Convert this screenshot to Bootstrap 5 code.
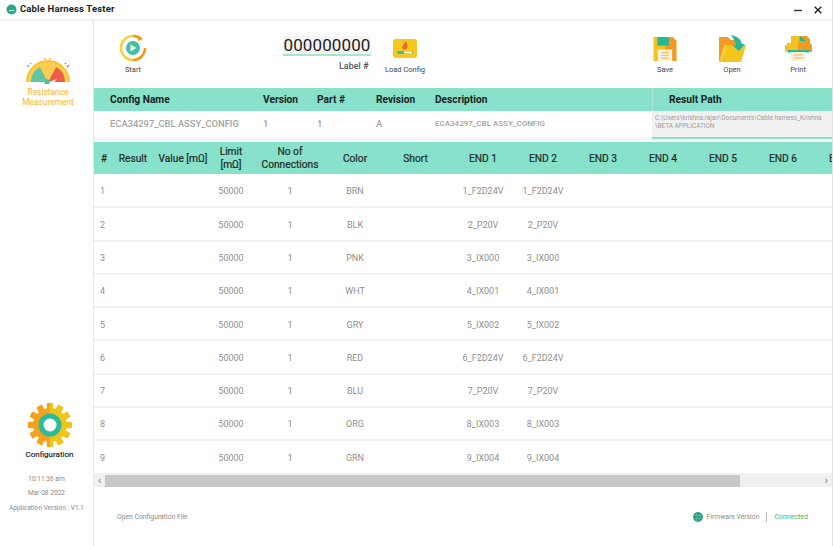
<!DOCTYPE html>
<html lang="en">
<head>
<meta charset="utf-8">
<title>Cable Harness Tester</title>
<link rel="stylesheet" href="https://cdn.jsdelivr.net/npm/bootstrap@5.3.0/dist/css/bootstrap.min.css">
<style>
html,body{margin:0;height:546px;overflow:hidden;background:#fff;font-family:Roboto,"Liberation Sans",sans-serif}
.shell{width:833px;height:546px;border-right:1px solid #e2e2e2}
.titlebar{height:21px;border-bottom:2px solid #f2f2f2;padding-left:6px}
.titlebar .ttl{font-size:9.5px;font-weight:700;color:#222;margin-left:3px;letter-spacing:.15px}
.winbtns{margin-right:10px;gap:12px}
.mainrow{height:525px}
.side{width:94px;flex:none;border-right:1px solid #e8e8e8;text-align:center}
.side .meas{margin-top:35px;padding-left:3px}
.side .mlabel{font-size:8.4px;line-height:10px;color:#fbb52c;margin-top:3px}
.side .lower{margin-bottom:30px}
.side .cfgicon{padding-left:6px}
.side .clabel{font-size:8px;color:#222;line-height:10px;margin-top:3px;padding-left:6px;-webkit-text-stroke:.15px #222}
.side .info{font-size:6.6px;color:#8a8a8a;line-height:14.8px;margin-top:12px}
.content{width:738px;flex:none;overflow:hidden}
.toolbar{height:67px}
.tool{font-size:7.5px;color:#444;text-align:center;line-height:9px}
.tool svg{display:block;margin:0 auto 4px}
.t-start{width:40px;margin:13px 0 0 19px}
.t-start svg,.t-open svg{margin-bottom:3px}
.t-label{width:88px;margin:15px 0 0 130px;text-align:center}
.labelval{background:#f5f5f5;border-bottom:2px solid #a5e6d3;font-size:17px;line-height:18px;height:20px;color:#222;letter-spacing:.1px}
.labelcap{font-size:9px;color:#444;line-height:10px;margin-top:5px;padding-left:56px;white-space:nowrap;text-align:left;-webkit-text-stroke:.1px #444}
.t-load{width:50px;margin:18px 0 0 9px}
.t-load .tl{display:block;margin-top:7px}
.t-save{width:40px;margin:16px 0 0 215px}
.t-open{width:40px;margin:14px 0 0 27px}
.t-print{width:40px;margin:15px 0 0 26px}
.cfghead{height:23px;background:#88e1cb;font-size:10.2px;font-weight:700;color:#16231f}
.cfgrow{height:26px;font-size:9.4px;font-weight:500;color:#a3a3a3}
.cfgband span{display:block;flex:none}
.c1{width:169px;padding-left:16px}
.c2{width:54px}.c3{width:59px}.c4{width:59px}.c5{width:217px}
.cfgrow .c5{font-size:8px}
.c6{flex:1 1 auto!important;padding-left:16px;align-self:stretch;display:flex!important;align-items:center;border-left:1px dotted #c6efe4}
.cfgband .pathcell{flex:1 1 auto;align-self:stretch;background:#f1f1f1;border-bottom:2px solid #88e1cb;font-size:6.4px;line-height:8.2px;color:#9c9c9c;font-weight:400;padding:3px 0 0 3px;height:28px;white-space:nowrap}
.gapstrip{height:5px;background:#f4f4f4}
.gridwrap{height:332px;overflow:hidden}
.wiretable{table-layout:fixed;width:779px;margin:0;border-collapse:collapse}
.wiretable th{background:#88e1cb;height:32px;font-size:10.2px;line-height:13px;font-weight:400;color:#1c2a26;text-align:center;padding:0;border:0;vertical-align:middle;white-space:nowrap;box-shadow:none;-webkit-text-stroke:.2px #1c2a26}
.wiretable td{height:33.3px;font-size:9px;color:#8f8f8f;text-align:center;padding:3px 0 0;border:0;border-bottom:2px solid #f2f2f2;vertical-align:middle;white-space:nowrap;box-shadow:none}
.wiretable td:first-child{text-align:left;padding-left:6px}
.scroller{height:13px;background:#f0f0f0;font-size:11px;color:#777;line-height:12px;padding:0 4px}
.thumb{height:12px;background:#c8c8c8;width:635px;margin-left:4px}
.footbar{height:60px;font-size:6.8px;color:#8a8a8a;padding:0 24px 0 23px}
.divbar{width:1px;height:10px;background:#bbb;margin:0 7px}
.connected{color:#3fb56b;font-size:7px}
</style>
</head>
<body>
<div class="shell d-flex flex-column">
  <div class="titlebar d-flex align-items-center">
    <svg width="11" height="11" viewBox="0 0 11 11"><circle cx="5.5" cy="5.5" r="5" fill="#28a88b"/><path d="M3 6.500h5" stroke="#bdeee0" stroke-width="1.200"/></svg>
    <span class="ttl">Cable Harness Tester</span>
    <div class="ms-auto d-flex align-items-center winbtns">
      <svg width="8" height="8" viewBox="0 0 8 8"><path d="M0 4.500h8" stroke="#333" stroke-width="1.400"/></svg>
      <svg width="8" height="8" viewBox="0 0 8 8"><path d="M.7.7l6.600 6.600M7.300.7L.7 7.300" stroke="#222" stroke-width="1.400"/></svg>
    </div>
  </div>
  <div class="mainrow d-flex">
    <aside class="side d-flex flex-column">
      <div class="meas">
        <svg width="48" height="28" viewBox="0 0 48 28">
          <path d="M3 26a21 21 0 0 1 42 0z" fill="#fbd04f"/>
          <path d="M3 26a21 21 0 0 1 42 0" fill="none" stroke="#f8c23a" stroke-width="2"/>
          <path d="M7 26a17 17 0 0 1 9-15l8 15z" fill="#5fc6a3"/>
          <path d="M32 11a17 17 0 0 1 9 15H24z" fill="#ee5c4a"/>
          <path d="M16 11a17 17 0 0 1 16 0l-8 15z" fill="#fccb52"/>
          <circle cx="23" cy="26" r="2.700" fill="#4fc0a5"/>
          <path d="M25 26l8-3-3 3z" fill="#fff"/>
          <path d="M21 2v2M26 2v2" stroke="#f7b733" stroke-width="1.400"/>
          <path d="M3 9l2 2M6 7l1 1" stroke="#5fc6a3" stroke-width="1.300"/>
          <path d="M45 9l-2 2M42 7l-1 1" stroke="#ee5c4a" stroke-width="1.300"/>
        </svg>
        <div class="mlabel">Resistance<br>Measurement</div>
      </div>
      <div class="mt-auto lower">
        <div class="cfgicon">
          <svg width="44" height="44" viewBox="-22 -22 44 44">
            <defs><clipPath id="gl"><rect x="-22" y="-22" width="22" height="44"/></clipPath><clipPath id="gr"><rect x="0" y="-22" width="22" height="44"/></clipPath>
            <g id="gearshape"><circle r="17"/><g id="tth"><rect x="-3.200" y="-22" width="6.400" height="8" rx="1"/><rect x="-3.200" y="14" width="6.400" height="8" rx="1"/></g><use href="#tth" transform="rotate(30)"/><use href="#tth" transform="rotate(60)"/><use href="#tth" transform="rotate(90)"/><use href="#tth" transform="rotate(120)"/><use href="#tth" transform="rotate(150)"/></g></defs>
            <use href="#gearshape" fill="#f5a21f" clip-path="url(#gl)"/>
            <use href="#gearshape" fill="#f0c419" clip-path="url(#gr)"/>
            <circle r="11.500" fill="#2bbd9b"/><circle r="6.500" fill="#fff"/>
          </svg>
        </div>
        <div class="clabel">Configuration</div>
        <div class="info">10:11:36 am<br>Mar 08 2022<br>Application Version : V1.1</div>
      </div>
    </aside>
    <main class="content">
      <div class="toolbar d-flex align-items-start">
        <div class="tool t-start">
          <svg width="28" height="28" viewBox="0 0 28 28">
            <path d="M14 2A12 12 0 0 0 14 26" fill="none" stroke="#f6cf45" stroke-width="2.600"/>
            <path d="M14 26A12 12 0 0 0 26 14" fill="none" stroke="#f39c12" stroke-width="2.600"/>
            <path d="M14 2a12 12 0 0 1 8 3" fill="none" stroke="#f39c12" stroke-width="2.600"/><path d="M19 1l5 4-5 2z" fill="#f39c12"/>
            <circle cx="14" cy="14" r="7" fill="#3fc0a0"/><path d="M11.500 10.500v7l5.800-3.500z" fill="#fff"/>
          </svg>
          Start
        </div>
        <div class="t-label">
          <div class="labelval">000000000</div>
          <div class="labelcap">Label #</div>
        </div>
        <div class="tool t-load">
          <svg width="24" height="19" viewBox="0 0 24 19"><rect width="24" height="19" rx="3" fill="#f8c81e"/><path d="M12.500 2c1 2 2.500 3 2 6a3 3 0 0 1-5.500 1c0-2 2-3 3.500-7z" fill="#ea6a2a"/><rect x="4" y="12" width="16" height="3" rx="1.500" fill="#3cc0a4"/><rect x="11" y="12.500" width="8" height="2" fill="#fff"/></svg>
          <span class="tl">Load Config</span>
        </div>
        <div class="tool t-save">
          <svg width="24" height="24" viewBox="0 0 24 25"><path d="M0 0h12v25H0z" fill="#f6c21c"/><path d="M12 0h8l4 4v21H12z" fill="#f39a22"/><rect x="4" y="0" width="12" height="9" fill="#25b898"/><rect x="4.500" y="13" width="15" height="12" fill="#f5f0e4"/><path d="M8 16h8M8 19h8M8 22h8" stroke="#f6b73c" stroke-width="1"/></svg>
          Save
        </div>
        <div class="tool t-open">
          <svg width="27" height="27" viewBox="0 0 27 27"><path d="M0 2h9l3 3h8v22H0z" fill="#f39a22"/><path d="M5 10h22l-5 17H0z" fill="#f3c51d"/><path d="M6 13L2 25" stroke="#f8de7a" stroke-width="1"/><path d="M12 0C18 1 22 4 23 9l3 0-6 7-7-6 4 0C16 6 14 3 12 0z" fill="#2bb89a"/></svg>
          Open
        </div>
        <div class="tool t-print">
          <svg width="27" height="25" viewBox="0 0 27 25"><path d="M6 0h8v13H6z" fill="#f6c21c"/><path d="M14 0h8l3 3v10H14z" fill="#f39a22"/><path d="M15 0l6 5h-6z" fill="#25b898"/><path d="M2 7h11v9H2zM0 9h13v7H0z" fill="#f6c21c"/><path d="M13 7h12l2 2v7H13z" fill="#f39a22"/><rect x="3" y="14" width="21" height="2.500" fill="#2bb89a"/><rect x="6" y="16" width="15" height="9" fill="#f5f0e4"/><path d="M9 19h9M9 22h9" stroke="#f6b73c"/></svg>
          Print
        </div>
      </div>
      <div class="cfgband">
        <div class="cfghead d-flex align-items-center">
          <span class="c1">Config Name</span><span class="c2">Version</span><span class="c3">Part #</span><span class="c4">Revision</span><span class="c5">Description</span><span class="c6">Result Path</span>
        </div>
        <div class="cfgrow d-flex align-items-center">
          <span class="c1">ECA34297_CBL ASSY_CONFIG</span><span class="c2">1</span><span class="c3">1</span><span class="c4">A</span><span class="c5">ECA34297_CBL ASSY_CONFIG</span>
          <span class="pathcell">C:\Users\krishna.rajan\Documents\Cable harness_Krishna<br>\BETA APPLICATION</span>
        </div>
      </div>
      <div class="gapstrip"></div>
      <div class="gridwrap">
        <table class="table wiretable">
          <colgroup><col style="width:20px"><col style="width:38px"><col style="width:62px"><col style="width:34px"><col style="width:84px"><col style="width:46px"><col style="width:75px"><col style="width:60px"><col style="width:60px"><col style="width:60px"><col style="width:60px"><col style="width:60px"><col style="width:60px"><col style="width:60px"></colgroup>
          <thead><tr><th>#</th><th>Result</th><th>Value [mΩ]</th><th>Limit<br>[mΩ]</th><th>No of<br>Connections</th><th>Color</th><th>Short</th><th>END 1</th><th>END 2</th><th>END 3</th><th>END 4</th><th>END 5</th><th>END 6</th><th>END 7</th></tr></thead>
          <tbody>
            <tr><td>1</td><td></td><td></td><td>50000</td><td>1</td><td>BRN</td><td></td><td>1_F2D24V</td><td>1_F2D24V</td><td></td><td></td><td></td><td></td><td></td></tr>
            <tr><td>2</td><td></td><td></td><td>50000</td><td>1</td><td>BLK</td><td></td><td>2_P20V</td><td>2_P20V</td><td></td><td></td><td></td><td></td><td></td></tr>
            <tr><td>3</td><td></td><td></td><td>50000</td><td>1</td><td>PNK</td><td></td><td>3_IX000</td><td>3_IX000</td><td></td><td></td><td></td><td></td><td></td></tr>
            <tr><td>4</td><td></td><td></td><td>50000</td><td>1</td><td>WHT</td><td></td><td>4_IX001</td><td>4_IX001</td><td></td><td></td><td></td><td></td><td></td></tr>
            <tr><td>5</td><td></td><td></td><td>50000</td><td>1</td><td>GRY</td><td></td><td>5_IX002</td><td>5_IX002</td><td></td><td></td><td></td><td></td><td></td></tr>
            <tr><td>6</td><td></td><td></td><td>50000</td><td>1</td><td>RED</td><td></td><td>6_F2D24V</td><td>6_F2D24V</td><td></td><td></td><td></td><td></td><td></td></tr>
            <tr><td>7</td><td></td><td></td><td>50000</td><td>1</td><td>BLU</td><td></td><td>7_P20V</td><td>7_P20V</td><td></td><td></td><td></td><td></td><td></td></tr>
            <tr><td>8</td><td></td><td></td><td>50000</td><td>1</td><td>ORG</td><td></td><td>8_IX003</td><td>8_IX003</td><td></td><td></td><td></td><td></td><td></td></tr>
            <tr><td>9</td><td></td><td></td><td>50000</td><td>1</td><td>GRN</td><td></td><td>9_IX004</td><td>9_IX004</td><td></td><td></td><td></td><td></td><td></td></tr>
          </tbody>
        </table>
      </div>
      <div class="scroller d-flex align-items-center">
        <span>‹</span><div class="thumb"></div><span class="ms-auto">›</span>
      </div>
      <div class="footbar d-flex align-items-center">
        <span>Open Configuration File</span>
        <div class="ms-auto d-flex align-items-center">
          <svg width="10" height="10" viewBox="0 0 10 10" class="me-1"><circle cx="5" cy="5" r="5" fill="#2f9c86"/><path d="M0 3.500h10M0 6.500h10M3.500 0v10M6.500 0v10" stroke="#6cc0ae" stroke-width=".5"/></svg>
          <span>Firmware Version</span><span class="divbar"></span><span class="connected">Connected</span>
        </div>
      </div>
    </main>
  </div>
</div>
<script src="https://cdn.jsdelivr.net/npm/bootstrap@5.3.0/dist/js/bootstrap.bundle.min.js"></script>
</body>
</html>
